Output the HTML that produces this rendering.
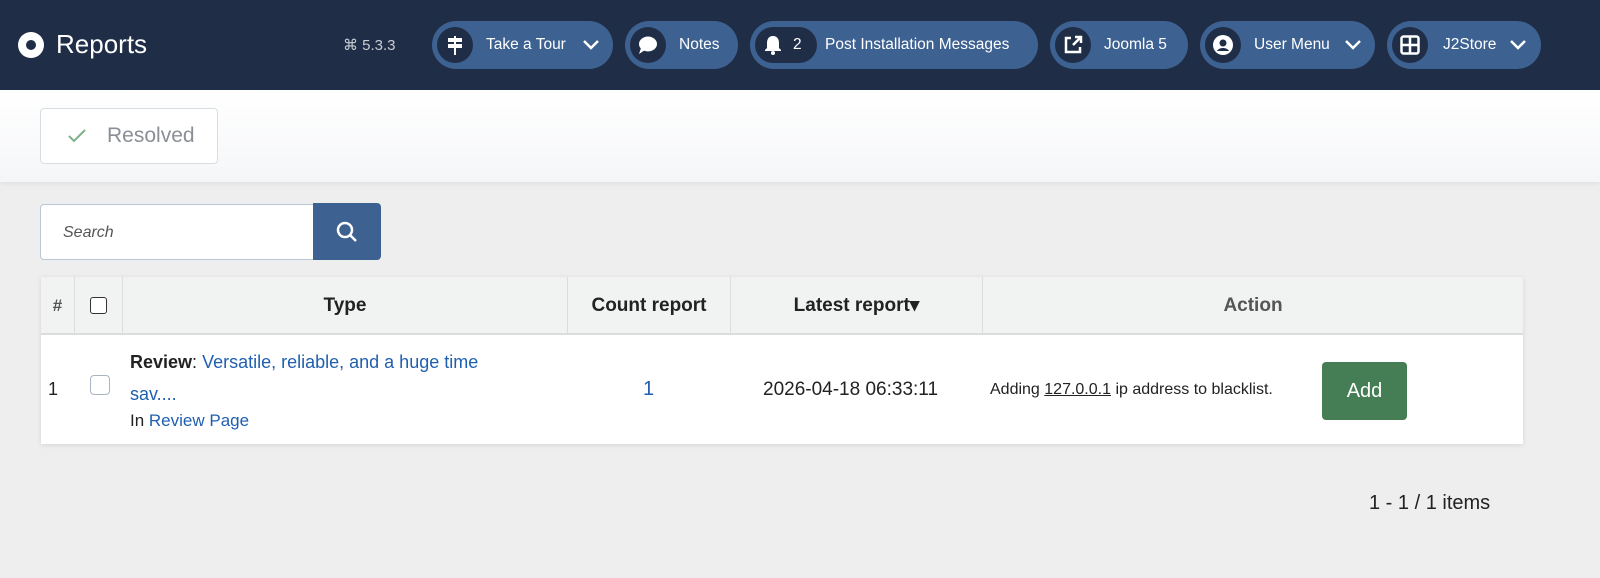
<!DOCTYPE html>
<html><head><meta charset="utf-8"><style>
*{box-sizing:border-box;margin:0;padding:0}
body{width:1600px;height:578px;background:#eeeeee;font-family:"Liberation Sans",sans-serif;position:relative;overflow:hidden;color:#222}
.hd{position:absolute;left:0;top:0;width:1600px;height:90px;background:#1f2d47}
.logo{position:absolute;left:18px;top:32px;width:26px;height:26px;border-radius:50%;background:#fff}
.logo:after{content:"";position:absolute;left:8px;top:8px;width:10px;height:10px;border-radius:50%;background:#1f2d47}
.title{position:absolute;left:56px;top:29px;font-size:26px;color:#fff}
.ver{position:absolute;left:343px;top:36px;font-size:15px;color:#c8ccd4}
.pill{position:absolute;top:21px;height:48px;border-radius:24px;background:#3d6191;color:#fff;font-size:15.5px;line-height:48px}
.pill .ic{position:absolute;left:5px;top:6px;width:36px;height:36px;border-radius:50%;background:#1f2d47}
.pill .ic svg{position:absolute;left:8px;top:8px}
.pill span{position:absolute;white-space:nowrap}
.chev{position:absolute;top:17px}
.tb{position:absolute;left:0;top:90px;width:1600px;height:92px;background:linear-gradient(#fff,#f5f6f8);box-shadow:0 2px 4px rgba(0,0,0,.06)}
.res{position:absolute;left:40px;top:18px;width:178px;height:56px;border:1px solid #d8dde3;border-radius:4px;background:#fff;color:#8a8f96;font-size:21px;line-height:54px;padding-left:66px}
.srch{position:absolute;left:40px;top:204px;width:274px;height:56px;border:1px solid #b8c6d8;border-radius:4px 0 0 4px;background:#fff;font-style:italic;color:#555;font-size:16px;line-height:56px;padding-left:22px}
.sbtn{position:absolute;left:313px;top:203px;width:68px;height:57px;background:#3d6191;border-radius:0 4px 4px 0}
.tbl{position:absolute;left:41px;top:277px;width:1482px;height:167px;background:#fff;box-shadow:0 1px 5px rgba(0,0,0,.1)}
.th{position:absolute;top:0;height:58px;background:#f1f2f2;border-bottom:2px solid #dcdcdc;border-right:1px solid #dcdcdc;font-weight:bold;font-size:19px;line-height:58px;text-align:center}
.c{position:absolute;font-size:18px}
a{color:#1f5fb0;text-decoration:none}
</style></head><body>
<div class="hd">
<div class="logo"></div><div class="title">Reports</div>
<div class="ver">⌘ 5.3.3</div>
<div class="pill" style="left:432px;width:181px"><div class="ic"><svg width="20" height="20" viewBox="0 0 20 20"><rect x="3" y="3" width="14" height="4" fill="#fff"/><rect x="3" y="9" width="14" height="4" fill="#fff"/><rect x="9" y="1" width="2" height="19" fill="#fff"/></svg></div><span style="left:54px">Take a Tour</span><svg class="chev" style="left:150px" width="18" height="14" viewBox="0 0 18 14"><path d="M2 3l7 7 7-7" stroke="#fff" stroke-width="2.5" fill="none"/></svg></div>
<div class="pill" style="left:625px;width:113px"><div class="ic"><svg width="20" height="20" viewBox="0 0 20 20"><ellipse cx="10" cy="9" rx="9" ry="7.5" fill="#fff"/><path d="M3 13L1 19l6-4z" fill="#fff"/></svg></div><span style="left:54px">Notes</span></div>
<div class="pill" style="left:750px;width:288px"><div class="ic" style="width:62px;border-radius:18px"><svg width="20" height="20" viewBox="0 0 20 20"><path d="M10 1c-4 0-6 3-6 7v5l-2 2v1h16v-1l-2-2V8c0-4-2-7-6-7z" fill="#fff"/><circle cx="10" cy="18" r="2" fill="#fff"/></svg><span style="left:38px;top:-6px">2</span></div><span style="left:75px">Post Installation Messages</span></div>
<div class="pill" style="left:1050px;width:138px"><div class="ic"><svg width="20" height="20" viewBox="0 0 20 20"><path d="M8 3H3v14h14v-5" stroke="#fff" stroke-width="2.5" fill="none"/><path d="M10 10l8-8M12 2h6v6" stroke="#fff" stroke-width="2.5" fill="none"/></svg></div><span style="left:54px">Joomla 5</span></div>
<div class="pill" style="left:1200px;width:175px"><div class="ic"><svg width="20" height="20" viewBox="0 0 20 20"><circle cx="10" cy="10" r="10" fill="#fff"/><circle cx="10" cy="8" r="3.5" fill="#1f2d47"/><path d="M4 16c2-4 10-4 12 0" fill="#1f2d47"/></svg></div><span style="left:54px">User Menu</span><svg class="chev" style="left:144px" width="18" height="14" viewBox="0 0 18 14"><path d="M2 3l7 7 7-7" stroke="#fff" stroke-width="2.5" fill="none"/></svg></div>
<div class="pill" style="left:1387px;width:154px"><div class="ic"><svg width="20" height="20" viewBox="0 0 20 20"><rect x="1.5" y="1.5" width="17" height="17" rx="2" stroke="#fff" stroke-width="2.5" fill="none"/><path d="M10 1v18M1 10h18" stroke="#fff" stroke-width="2.5"/></svg></div><span style="left:56px">J2Store</span><svg class="chev" style="left:122px" width="18" height="14" viewBox="0 0 18 14"><path d="M2 3l7 7 7-7" stroke="#fff" stroke-width="2.5" fill="none"/></svg></div>
</div>
<div class="tb"><div class="res"><svg style="position:absolute;left:26px;top:19px" width="20" height="16" viewBox="0 0 20 16"><path d="M2 8l5 5L18 2" stroke="#7fb08a" stroke-width="2" fill="none"/></svg>Resolved</div></div>
<div class="srch">Search</div>
<div class="sbtn"><svg style="position:absolute;left:23px;top:18px" width="22" height="22" viewBox="0 0 22 22"><circle cx="9" cy="9" r="7" stroke="#fff" stroke-width="2.5" fill="none"/><path d="M14 14l6 6" stroke="#fff" stroke-width="2.5"/></svg></div>
<div class="tbl">
<div class="th" style="left:0;width:34px;color:#555;font-size:17px">#</div>
<div class="th" style="left:34px;width:48px"><div style="position:absolute;left:15px;top:20px;width:17px;height:17px;border:1.5px solid #333;border-radius:3px;background:#fff"></div></div>
<div class="th" style="left:82px;width:445px">Type</div>
<div class="th" style="left:527px;width:163px">Count report</div>
<div class="th" style="left:690px;width:252px">Latest report▾</div>
<div class="th" style="left:942px;width:540px;border-right:0;color:#555">Action</div>
<div class="c" style="left:7px;top:102px">1</div>
<div style="position:absolute;left:49px;top:98px;width:20px;height:20px;border:1px solid #aab4c4;border-radius:4px"></div>
<div class="c" style="left:89px;top:69px;line-height:32px;width:395px"><b>Review</b>: <a>Versatile, reliable, and a huge time sav....</a></div>
<div class="c" style="left:89px;top:134px;font-size:17px">In <a>Review Page</a></div>
<div class="c" style="left:602px;top:101px;font-size:20px"><a>1</a></div>
<div class="c" style="left:722px;top:102px;font-size:19px">2026-04-18 06:33:11</div>
<div class="c" style="left:949px;top:104px;font-size:16px">Adding <u>127.0.0.1</u> ip address to blacklist.</div>
<div style="position:absolute;left:1281px;top:85px;width:85px;height:58px;background:#457d54;border-radius:4px;color:#fff;font-size:20px;line-height:58px;text-align:center">Add</div>
</div>
<div style="position:absolute;left:1369px;top:492px;font-size:20px">1 - 1 / 1 items</div>
</body></html>
